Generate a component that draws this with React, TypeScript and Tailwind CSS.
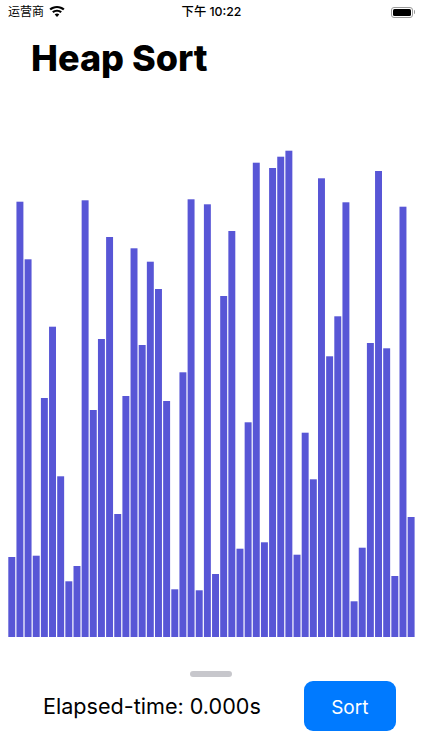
import React from 'react';

const FONT = 'font-["Inter","Noto_Sans_CJK_SC",sans-serif]';

// top edge of every bar, left to right. the baseline sits at y=637
const tops = [
  557, 201.7, 259.3, 555.7, 398, 326.7, 476.3, 581.3, 566, 200.3,
  410, 339, 237, 514, 396, 248.3, 345, 261.7, 289, 401,
  589.3, 372.3, 199.3, 590.3, 204.3, 574, 296, 231, 548.7, 422.3,
  162.7, 542.3, 168, 156.7, 150.7, 554.7, 432.7, 479.3, 178.3, 356.3,
  316.3, 202.3, 601.3, 547.7, 343, 171, 348.3, 576, 206.7, 517,
];

function StatusBar() {
  return (
    <div className="flex h-[22px] items-center justify-between pl-2 pr-[7px] pt-0.5 text-xs text-black">
      <div className="flex w-[100px] items-center gap-[5px]">
        <span>运营商</span>
        <svg width="16" height="12" viewBox="0 0 16 12" fill="#000">
          <path d="M8 1.900c2.400 0 4.500.9 6.100 2.400l1.500-1.500C13.600.9 11 0 8 0S2.400.9.4 2.800l1.500 1.500C3.500 2.800 5.600 1.900 8 1.900z" />
          <path d="M8 5.800c1.300 0 2.500.5 3.400 1.300l1.500-1.500C11.600 4.400 9.900 3.700 8 3.700s-3.600.7-4.900 1.900l1.500 1.500c.9-.8 2.100-1.300 3.400-1.300z" />
          <path d="M8 7.500c-.9 0-1.700.3-2.300.9L8 11l2.300-2.600c-.6-.6-1.400-.9-2.300-.9z" />
        </svg>
      </div>
      <span className="text-[12.300px] font-medium">下午 10:22</span>
      <div className="flex w-[100px] items-center justify-end">
        <div className="flex h-[11px] w-[22px] items-center rounded-[3px] border border-[#9a9a9a] p-[1px]">
          <div className="h-full w-full rounded-[1.500px] bg-black" />
        </div>
        <div className="ml-[1px] h-1 w-[1px] rounded-r-sm bg-[#9a9a9a]" />
      </div>
    </div>
  );
}

export default function App() {
  return (
    <div className={`flex h-[750px] w-[422px] flex-col overflow-hidden bg-white ${FONT}`}>
      <StatusBar />
      <h1 className="ml-[31px] mt-[15px] h-[113px] text-[36px] leading-[42px] font-extrabold text-black">Heap Sort</h1>
      <svg width="422" height="487" viewBox="0 150 422 487" className="block shrink-0">
        {tops.map((t, i) => (
          <rect key={i} x={8.3 + i * 8.15} y={t} width={6.95} height={637 - t} fill="#5856d6" />
        ))}
      </svg>
      <div className="mx-auto mt-[34px] h-1.5 w-[42px] rounded-[3px] bg-[#c7c7cc]" />
      <div className="mt-1 flex items-center pl-[43px]">
        <span className="w-[260.500px] text-[21.600px] text-black">Elapsed-time: 0.000s</span>
        <button className="h-[50px] w-[92.500px] rounded-[9px] bg-[#007aff] pt-1 text-[19px] text-white">Sort</button>
      </div>
    </div>
  );
}
